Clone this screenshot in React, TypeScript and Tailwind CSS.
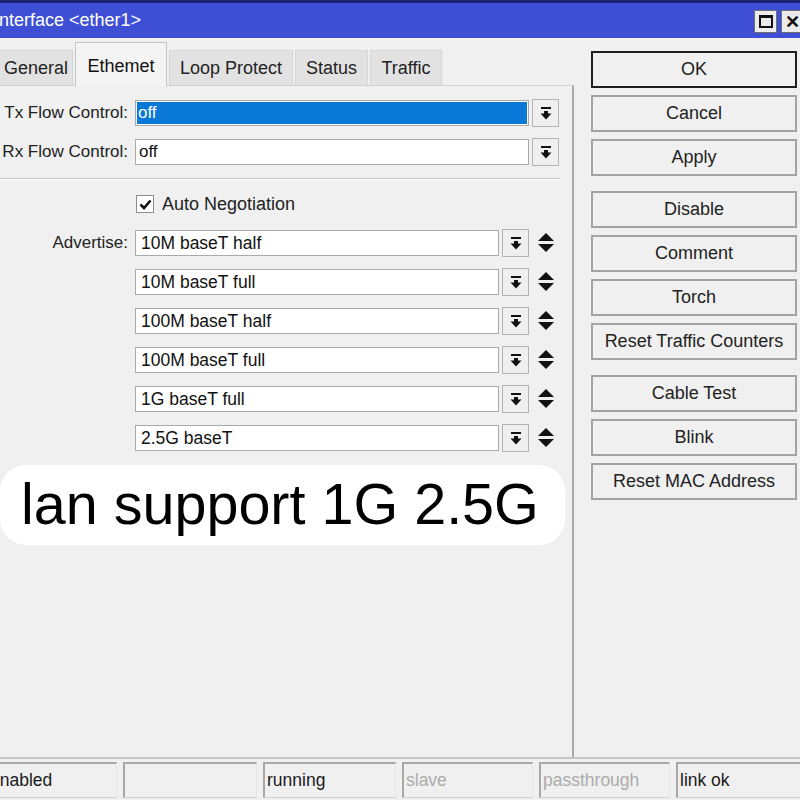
import React from "react";

const FONT = { fontFamily: '"Liberation Sans", Arial, sans-serif' };

function DropIcon() {
  return (
    <svg width="12" height="15" viewBox="0 0 12 15">
      <rect x="1" y="1" width="10" height="2" fill="#111" />
      <rect x="4" y="5" width="4" height="3" fill="#111" />
      <polygon points="0.5,7.5 11.5,7.5 6,13.5" fill="#111" />
    </svg>
  );
}

function UpDownIcon() {
  return (
    <svg width="16" height="20" viewBox="0 0 16 20">
      <polygon points="8,0 16,8 0,8" fill="#111" />
      <polygon points="0,11 16,11 8,19" fill="#111" />
    </svg>
  );
}

function DropButton() {
  return (
    <div className="w-[27px] h-[28px] bg-[#efefef] border border-[#b4b4b4] flex items-center justify-center">
      <DropIcon />
    </div>
  );
}

function FlowRow({ label, value, selected }: { label: string; value: string; selected?: boolean }) {
  return (
    <div className="flex items-center h-[28px]">
      <div className="w-[128px] text-right text-[17px] text-[#222] whitespace-nowrap">{label}</div>
      <div className="ml-[7px] w-[394px] h-[26px] bg-white border border-[#aaaaaa] p-[1px] flex">
        {selected ? (
          <div className="flex-1 bg-[#0a78d6] text-white text-[17px] leading-[22px] pl-[1px]">{value}</div>
        ) : (
          <div className="flex-1 text-[#111] text-[17px] leading-[22px] pl-[2px]">{value}</div>
        )}
      </div>
      <div className="ml-[3px]">
        <DropButton />
      </div>
    </div>
  );
}

function AdvRow({ label, value }: { label?: string; value: string }) {
  return (
    <div className="flex items-center h-[28px]">
      <div className="w-[128px] text-right text-[17px] text-[#222] whitespace-nowrap">{label ?? ""}</div>
      <div className="ml-[7px] w-[364px] h-[26px] bg-white border border-[#aaaaaa] flex items-center">
        <span className="pl-[5px] text-[17.5px] text-[#111]">{value}</span>
      </div>
      <div className="ml-[3px]">
        <DropButton />
      </div>
      <div className="ml-[9px] flex items-center">
        <UpDownIcon />
      </div>
    </div>
  );
}

function SideButton({ label, primary }: { label: string; primary?: boolean }) {
  return (
    <div
      className={
        "h-[37px] flex items-center justify-center text-[18px] text-[#222] bg-[#f0f0f0] " +
        (primary ? "border-2 border-[#1e1e1e]" : "border-2 border-[#a3a3a3]")
      }
    >
      {label}
    </div>
  );
}

function Tab({ label, w, active }: { label: string; w: string; active?: boolean }) {
  if (active) {
    return (
      <div
        className={
          w +
          " h-[44px] bg-[#f4f4f4] border border-b-0 border-[#c4c4c4] flex items-start justify-center pt-[10px] text-[18px] text-[#111] relative z-10 -mb-[1px]"
        }
      >
        {label}
      </div>
    );
  }
  return (
    <div
      className={
        w +
        " h-[35px] bg-[#e2e2e2] border border-b-0 border-[#d6d6d6] flex items-center justify-center text-[18px] text-[#222]"
      }
    >
      {label}
    </div>
  );
}

function StatusCell({ text, w, dim, extra }: { text: string; w: string; dim?: boolean; extra?: string }) {
  return (
    <div
      className={
        w +
        " h-[36px] border-t-2 border-l-2 border-[#a8a8a8] border-b border-r border-b-[#cfcfcf] border-r-[#e6e6e6] flex items-center pl-[2px] text-[17.5px] whitespace-nowrap " +
        (dim ? "text-[#ababab] " : "text-[#1a1a1a] ") +
        (extra ?? "")
      }
    >
      {text}
    </div>
  );
}

export default function App() {
  return (
    <div className="w-[800px] h-[800px] bg-[#f0f0f0] flex flex-col overflow-hidden" style={FONT}>
      {/* Title bar */}
      <div className="h-[38px] shrink-0 bg-[#3e4fd6] border-t-[3px] border-[#1d2476] flex items-center justify-between">
        <span className="-ml-[6px] text-white text-[18px] whitespace-nowrap">Interface &lt;ether1&gt;</span>
        <div className="flex gap-[4px] -mr-[4px] self-start mt-[7px]">
          <div className="w-[23px] h-[23px] bg-[#ececec] border border-[#6f6f6f] flex items-center justify-center">
            <div className="w-[14px] h-[13px] border-2 border-[#111] border-t-[3px]" />
          </div>
          <div className="w-[23px] h-[23px] bg-[#ececec] border border-[#6f6f6f] flex items-center justify-center text-[18px] font-bold text-[#111] leading-none">
            ✕
          </div>
        </div>
      </div>

      {/* Body */}
      <div className="flex flex-1 min-h-0">
        <div className="w-[574px] flex flex-col">
          <div className="h-[47px] flex items-end gap-[2px] shrink-0">
            <Tab label="General" w="w-[74px] -ml-[1px]" />
            <Tab label="Ethemet" w="w-[92px]" active />
            <Tab label="Loop Protect" w="w-[124px]" />
            <Tab label="Status" w="w-[73px]" />
            <Tab label="Traffic" w="w-[72px]" />
          </div>
          <div className="flex-1 border-t border-[#d2d2d2] border-r-2 border-r-[#a9a9a9] pt-[13px] flex flex-col">
            <div className="flex flex-col gap-[11px]">
              <FlowRow label="Tx Flow Control:" value="off" selected />
              <FlowRow label="Rx Flow Control:" value="off" />
            </div>
            <div className="mt-[12px] w-[560px] h-[2px] border-t border-[#c6c6c6] border-b border-b-white" />
            <div className="mt-[15px] h-[18px] flex items-center">
              <div className="ml-[136px] w-[18px] h-[18px] bg-white border border-[#8c8c8c] flex items-center justify-center">
                <svg width="13" height="11" viewBox="0 0 13 11">
                  <path d="M1.5 5.5 L5 9 L11.5 1.5" stroke="#111" strokeWidth="2.6" fill="none" />
                </svg>
              </div>
              <span className="ml-[8px] text-[18px] text-[#222]">Auto Negotiation</span>
            </div>
            <div className="mt-[16px] flex flex-col gap-[11px]">
              <AdvRow label="Advertise:" value="10M baseT half" />
              <AdvRow value="10M baseT full" />
              <AdvRow value="100M baseT half" />
              <AdvRow value="100M baseT full" />
              <AdvRow value="1G baseT full" />
              <AdvRow value="2.5G baseT" />
            </div>
            <div className="mt-[13px] w-[565px] h-[80px] bg-white rounded-[26px] flex items-center pl-[21px]">
              <span className="text-[57.5px] text-black leading-none whitespace-nowrap">lan support 1G 2.5G</span>
            </div>
          </div>
        </div>

        <div className="flex-1 pl-[17px] pr-[3px] pt-[13px] flex flex-col">
          <div className="flex flex-col gap-[7px]">
            <SideButton label="OK" primary />
            <SideButton label="Cancel" />
            <SideButton label="Apply" />
          </div>
          <div className="mt-[15px] flex flex-col gap-[7px]">
            <SideButton label="Disable" />
            <SideButton label="Comment" />
            <SideButton label="Torch" />
            <SideButton label="Reset Traffic Counters" />
          </div>
          <div className="mt-[15px] flex flex-col gap-[7px]">
            <SideButton label="Cable Test" />
            <SideButton label="Blink" />
            <SideButton label="Reset MAC Address" />
          </div>
        </div>
      </div>

      {/* Status bar */}
      <div className="h-[43px] shrink-0 border-t-2 border-[#c4c4c4] pt-[3px] flex gap-[6px]">
        <StatusCell text="enabled" w="w-[133px]" extra="-ml-[16px] pl-[4px]" />
        <StatusCell text="" w="w-[134px]" />
        <StatusCell text="running" w="w-[133px]" />
        <StatusCell text="slave" w="w-[131px]" dim />
        <StatusCell text="passthrough" w="w-[131px]" dim />
        <StatusCell text="link ok" w="flex-1" extra="-mr-[4px]" />
      </div>
    </div>
  );
}
